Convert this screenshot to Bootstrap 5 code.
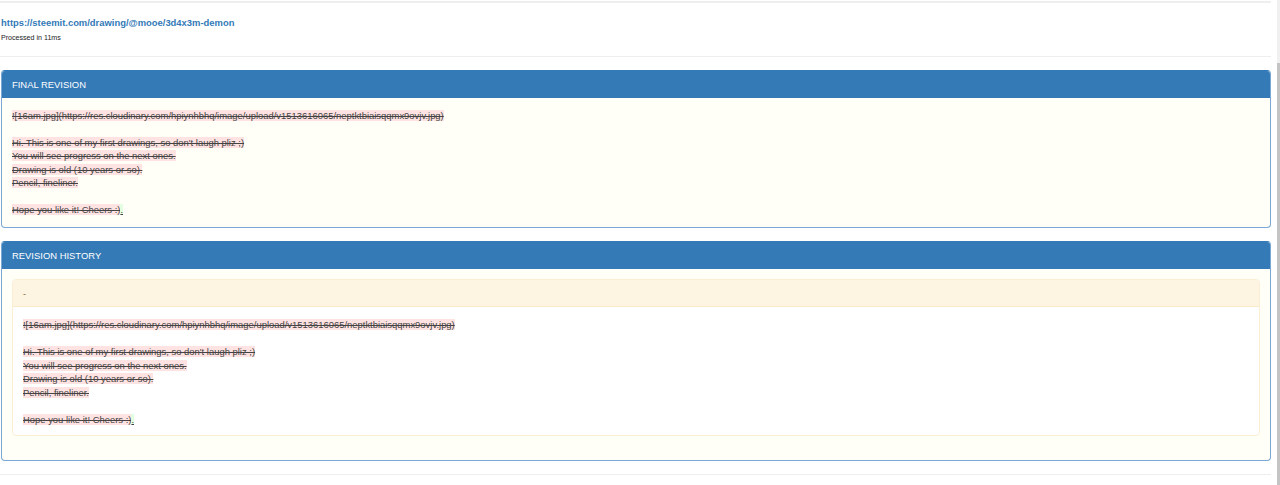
<!DOCTYPE html>
<html lang="en">
<head>
<meta charset="utf-8">
<title>Revision</title>
<link href="https://cdn.jsdelivr.net/npm/bootstrap@5.3.0/dist/css/bootstrap.min.css" rel="stylesheet">
<style>
html, body { height: 100%; overflow: hidden; }
body { background: #fff; font-family: "Liberation Sans", Arial, sans-serif; font-size: 9.44px; line-height: 1.42857; color: #333; }
.page-wrap { height: 485px; display: flex; flex-direction: column; padding-right: 9px; position: relative; }
.rule-top { border: 0; border-top: 2px solid #eee; margin: 1px 0 0; opacity: 1; }
.rule { border: 0; border-top: 1px solid #eee; margin: 0; opacity: 1; }
.post-head { padding: 13px 0 0 1px; height: 53px; }
.post-link { font-size: 9.42px; font-weight: 700; color: #337ab7; text-decoration: none; line-height: 14px; display: block; }
.post-time { font-size: 7.1px; line-height: 10px; margin-top: 3px; color: #222; }
.rev-panel { background: #fffff8; border: 1px solid #7aa7d3; border-top-color: #337ab7; border-radius: 4px; margin-left: 1px; }
.rev-panel .rev-title { background: #337ab7; color: #fff; font-size: 9.44px; height: 27px; line-height: 28px; padding: 0 10px; border-radius: 3px 3px 0 0; }
.panel-final { margin-top: 13px; height: 158px; }
.panel-history { margin-top: 13px; height: 220px; }
.rev-text { font-size: 9.44px; line-height: 13.5px; color: #444; white-space: pre-line; }
.panel-final .rev-text { padding: 10.5px 10px 0; }
.rev-inner { margin: 10px 10px 0; background: #fff; border: 1px solid #fbeed5; border-radius: 4px; height: 157px; }
.rev-inner-head { background: #fdf5e1; color: #8a6d3b; height: 27px; line-height: 27px; padding: 0 10px; font-size: 9.44px; border-bottom: 1px solid #faebcc; border-radius: 3px 3px 0 0; }
.rev-inner .rev-text { padding: 11px 10px 0; }
del { background: #ffe2e2; text-decoration: line-through; }
ins { background: #e2ffe2; text-decoration: underline; }
.rule-bottom { margin-top: 13px; }
.scroll-track { position: absolute; top: 0; right: 0; width: 3px; height: 485px; background: #f0f0f0; }
.scroll-thumb { position: absolute; top: 63px; left: 0; right: 0; height: 422px; background: #c4c4c4; }
</style>
</head>
<body>
<div class="page-wrap">
  <hr class="rule-top">
  <div class="post-head">
    <a class="post-link" href="#">https://steemit.com/drawing/@mooe/3d4x3m-demon</a>
    <div class="post-time">Processed in 11ms</div>
  </div>
  <hr class="rule">
  <div class="rev-panel panel-final">
    <div class="rev-title">FINAL REVISION</div>
    <div class="rev-text"><del>![16am.jpg](https://res.cloudinary.com/hpiynhbhq/image/upload/v1513616065/neptktbiaisqqmx9ovjv.jpg)</del>

<del>Hi. This is one of my first drawings, so don't laugh pliz ;)</del>
<del>You will see progress on the next ones.</del>
<del>Drawing is old (10 years or so).</del>
<del>Pencil, fineliner.</del>

<del>Hope you like it! Cheers :)</del><ins>.</ins></div>
  </div>
  <div class="rev-panel panel-history">
    <div class="rev-title">REVISION HISTORY</div>
    <div class="rev-inner">
      <div class="rev-inner-head">-</div>
      <div class="rev-text"><del>![16am.jpg](https://res.cloudinary.com/hpiynhbhq/image/upload/v1513616065/neptktbiaisqqmx9ovjv.jpg)</del>

<del>Hi. This is one of my first drawings, so don't laugh pliz ;)</del>
<del>You will see progress on the next ones.</del>
<del>Drawing is old (10 years or so).</del>
<del>Pencil, fineliner.</del>

<del>Hope you like it! Cheers :)</del><ins>.</ins></div>
    </div>
  </div>
  <hr class="rule rule-bottom">
  <div class="scroll-track"><div class="scroll-thumb"></div></div>
</div>
<script src="https://cdn.jsdelivr.net/npm/bootstrap@5.3.0/dist/js/bootstrap.bundle.min.js"></script>
</body>
</html>
